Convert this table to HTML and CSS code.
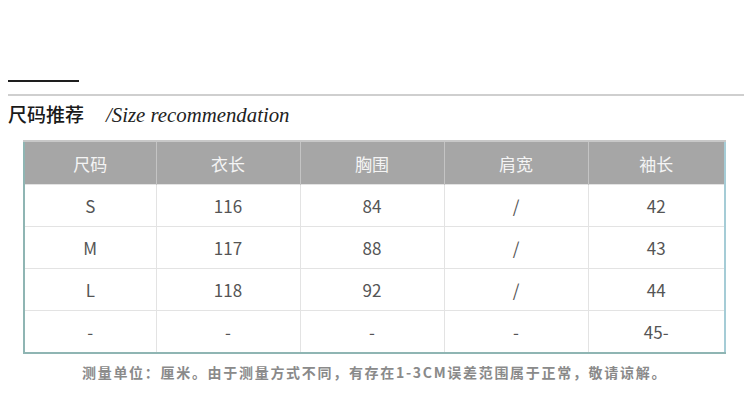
FILE: index.html
```html
<!DOCTYPE html>
<html lang="zh">
<head>
<meta charset="utf-8">
<link rel="stylesheet" href="styles.css">
</head>
<body>
<div class="page">
  <div class="rule-dark"></div>
  <div class="rule-light"></div>
  <div class="title">
    <span class="title-cn">尺码推荐</span>
    <span class="title-en">/Size recommendation</span>
  </div>
  <table class="size-table">
    <colgroup>
      <col class="c1"><col class="c2"><col class="c3"><col class="c4"><col class="c5">
    </colgroup>
    <thead>
      <tr><th>尺码</th><th>衣长</th><th>胸围</th><th>肩宽</th><th>袖长</th></tr>
    </thead>
    <tbody>
      <tr><td>S</td><td>116</td><td>84</td><td>/</td><td>42</td></tr>
      <tr><td>M</td><td>117</td><td>88</td><td>/</td><td>43</td></tr>
      <tr><td>L</td><td>118</td><td>92</td><td>/</td><td>44</td></tr>
      <tr><td>-</td><td>-</td><td>-</td><td>-</td><td>45-</td></tr>
    </tbody>
  </table>
  <p class="note">测量单位：厘米。由于测量方式不同，有存在1-3CM误差范围属于正常，敬请谅解。</p>
</div>
</body>
</html>
```
FILE: styles.css
```css
html, body {
  margin: 0;
  padding: 0;
  background: #ffffff;
}
.page {
  width: 750px;
  height: 406px;
  padding-top: 80px;
  box-sizing: border-box;
  font-family: "Noto Sans CJK SC", "Noto Sans", sans-serif;
}
.rule-dark {
  margin-left: 8px;
  width: 71px;
  height: 2px;
  background: #1e1e1e;
}
.rule-light {
  margin: 12px 6px 0 8px;
  height: 2px;
  background: #cfcfcf;
}
.title {
  display: flex;
  align-items: baseline;
  margin: 6px 0 0 8px;
  height: 24px;
}
.title-cn {
  font-size: 19px;
  font-weight: 500;
  color: #1a1a1a;
  line-height: 24px;
}
.title-en {
  margin-left: 22px;
  font-family: "Liberation Serif", serif;
  font-style: italic;
  font-size: 20.8px;
  color: #222;
  line-height: 24px;
}
.size-table {
  margin: 14px 0 0 23px;
  width: 701px;
  border-collapse: collapse;
  table-layout: fixed;
  border-left: 2px solid #8fb5b3;
  border-bottom: 2px solid #8fb5b3;
  border-right: 2px solid #a5ccd6;
}
.c1 { width: 132px; }
.c2 { width: 144px; }
.c3 { width: 144px; }
.c4 { width: 144px; }
.c5 { width: 137px; }
.size-table th {
  height: 42px;
  background: #a6a6a6;
  color: #f4f4f4;
  font-weight: 400;
  font-size: 17px;
  border-top: 2px solid #c8c8c8;
  border-left: 1px solid #c4c4c4;
  border-right: 1px solid #c4c4c4;
  padding: 0;
}
.size-table td {
  height: 41px;
  padding: 0;
  text-align: center;
  font-size: 17px;
  color: #555;
  border: 1px solid #e3e3e3;
}
.size-table tbody tr:last-child td {
  border-bottom: none;
}
.note {
  margin: 8px 0 0 82px;
  font-size: 14px;
  font-weight: 700;
  color: #8a8a8a;
  letter-spacing: 1.7px;
}
```
